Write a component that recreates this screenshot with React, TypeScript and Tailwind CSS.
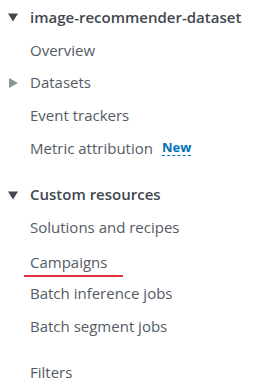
import React from "react";

const itemCls = "flex h-[33px] items-center pl-[30px] text-[15px] text-[#545b64]";
const headCls = "flex h-[33px] items-center gap-[12px] pl-[8px] text-[15px] font-semibold text-[#414750]";

function Caret({ open, muted }: { open: boolean; muted?: boolean }) {
  return (
    <svg width="10" height="10" viewBox="0 0 10 10" className="shrink-0" fill={muted ? "#879596" : "#414750"}>
      {open ? <path d="M0 1.5h10L5 9.5z" /> : <path d="M1 0v10L10 5z" />}
    </svg>
  );
}

export default function App() {
  return (
    <div
      className="flex h-[389px] w-[264px] flex-col bg-white pt-[1px]"
      style={{ fontFamily: "'Open Sans', 'Noto Sans', Arial, sans-serif" }}
    >
      <div className={headCls}>
        <Caret open />
        image-recommender-dataset
      </div>
      <div className={itemCls}>Overview</div>
      <div className="flex h-[33px] items-center gap-[12px] pl-[8px] text-[15px] text-[#545b64]">
        <Caret open={false} muted />
        Datasets
      </div>
      <div className={itemCls}>Event trackers</div>
      <div className={itemCls}>
        Metric attribution
        <span className="ml-[9px] border-b border-dashed border-[#0073bb] text-[13px] font-bold leading-[16px] text-[#0073bb]">
          New
        </span>
      </div>

      <div className={`mt-[14px] ${headCls}`}>
        <Caret open />
        Custom resources
      </div>
      <div className={itemCls}>Solutions and recipes</div>
      <div className="flex h-[34px] items-end pl-[24px] text-[15px] text-[#545b64]">
        <span className="w-[99px] border-b-2 border-[#e0303c] pl-[6px] leading-[26px]">Campaigns</span>
      </div>
      <div className={itemCls}>Batch inference jobs</div>
      <div className={itemCls}>Batch segment jobs</div>
      <div className={`mt-[14px] ${itemCls}`}>Filters</div>
    </div>
  );
}
